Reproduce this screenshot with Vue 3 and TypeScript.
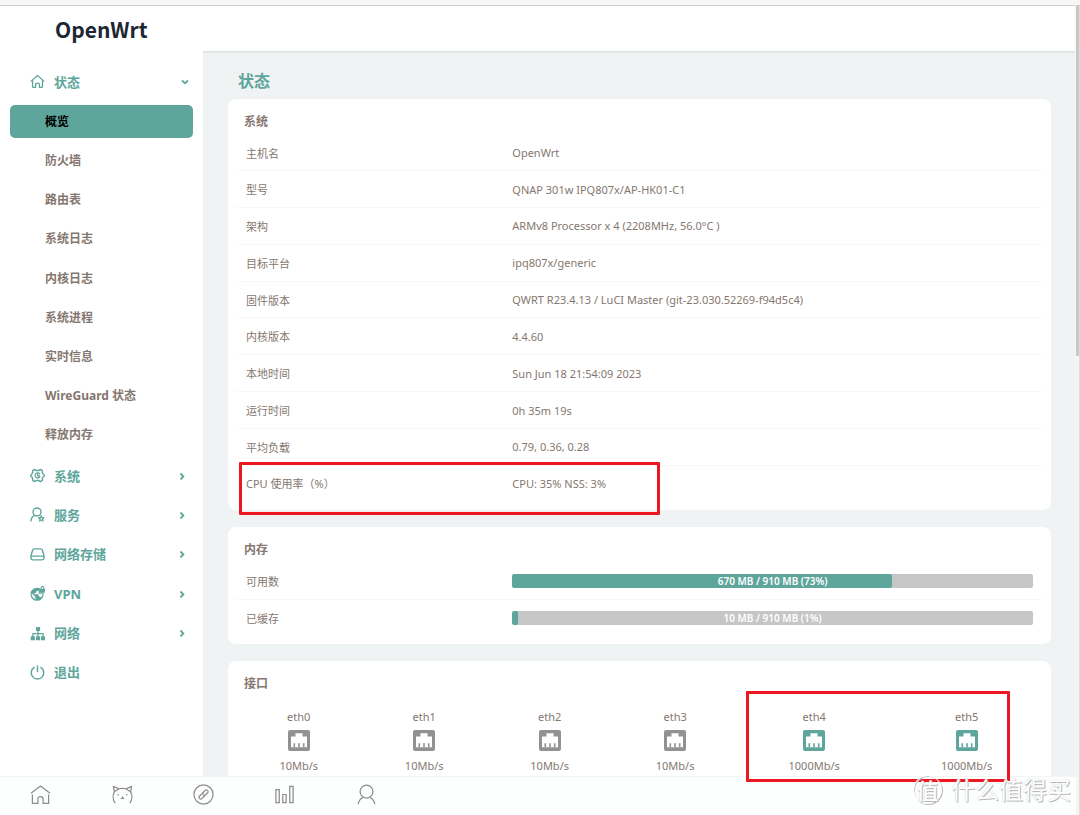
<script setup lang="ts">
interface Group { id: string; label: string }
interface Row { label: string; value: string }
interface Meter { label: string; text: string; percent: number }
interface Port { name: string; speed: string; up: boolean }

const statusPages: string[] = ['概览', '防火墙', '路由表', '系统日志', '内核日志', '系统进程', '实时信息', 'WireGuard 状态', '释放内存']
const groups: Group[] = [
  { id: 'gear', label: '系统' },
  { id: 'service', label: '服务' },
  { id: 'disk', label: '网络存储' },
  { id: 'vpn', label: 'VPN' },
  { id: 'network', label: '网络' },
  { id: 'power', label: '退出' },
]
const system: Row[] = [
  { label: '主机名', value: 'OpenWrt' },
  { label: '型号', value: 'QNAP 301w IPQ807x/AP-HK01-C1' },
  { label: '架构', value: 'ARMv8 Processor x 4 (2208MHz, 56.0°C )' },
  { label: '目标平台', value: 'ipq807x/generic' },
  { label: '固件版本', value: 'QWRT R23.4.13 / LuCI Master (git-23.030.52269-f94d5c4)' },
  { label: '内核版本', value: '4.4.60' },
  { label: '本地时间', value: 'Sun Jun 18 21:54:09 2023' },
  { label: '运行时间', value: '0h 35m 19s' },
  { label: '平均负载', value: '0.79, 0.36, 0.28' },
  { label: 'CPU 使用率（%）', value: 'CPU: 35% NSS: 3%' },
]
const memory: Meter[] = [
  { label: '可用数', text: '670 MB / 910 MB (73%)', percent: 73 },
  { label: '已缓存', text: '10 MB / 910 MB (1%)', percent: 1 },
]
const ports: Port[] = [
  { name: 'eth0', speed: '10Mb/s', up: false },
  { name: 'eth1', speed: '10Mb/s', up: false },
  { name: 'eth2', speed: '10Mb/s', up: false },
  { name: 'eth3', speed: '10Mb/s', up: false },
  { name: 'eth4', speed: '1000Mb/s', up: true },
  { name: 'eth5', speed: '1000Mb/s', up: true },
]
</script>

<template>
  <div class="app">
    <header class="top">
      <a class="brand" href="#">OpenWrt</a>
    </header>
    <div class="body">
      <nav class="side" aria-label="主菜单">
        <button class="group" type="button" aria-expanded="true">
          <svg class="gicon" viewBox="0 0 16 16" fill="none" stroke="currentColor" stroke-width="1.4" stroke-linejoin="round" stroke-linecap="round"><path d="M1.2 7.600 8 1.700l6.800 5.900M2.700 7v6.400c0 .5.3.9.9.9h2.300v-2.800c0-1.100.8-1.800 2.100-1.800s2.100.7 2.100 1.800v2.800h2.300c.6 0 .9-.4.9-.9V7" /></svg>
          <span>状态</span>
          <svg class="chev open" viewBox="0 0 8 8" fill="none" stroke="currentColor" stroke-width="1.800"><path d="M1 2.500 4 5.300 7 2.500" /></svg>
        </button>
        <ul class="pages">
          <li v-for="(page, i) in statusPages" :key="page">
            <a href="#" :class="{ active: i === 0 }">{{ page }}</a>
          </li>
        </ul>
        <ul class="groups">
          <li v-for="g in groups" :key="g.id">
            <button class="group" type="button">
              <svg class="gicon" viewBox="0 0 16 16" fill="none" stroke="currentColor" stroke-width="1.500" stroke-linejoin="round" stroke-linecap="round">
                <template v-if="g.id === 'gear'">
                  <path d="M4.800 1.500 6.400 2.600h3.200l1.600-1.100 2 1.200-.1 2 1.200 2 .9.700v1.200l-.9.700-1.200 2 .1 2-2 1.200-1.600-1.100H6.400l-1.600 1.100-2-1.200.1-2-1.200-2-.9-.7V7.400l.9-.7 1.200-2-.1-2z" />
                  <path d="M10.300 6.300A2.700 2.700 0 1 0 10.500 9.200M8.200 6.400v1.900h1.900" stroke-width="1.300" />
                </template>
                <template v-else-if="g.id === 'service'">
                  <circle cx="7.500" cy="5.200" r="4.200" />
                  <path d="M5.200 9C2.700 10 1.300 11.700 1 14.900" />
                  <path d="m12 9.300 1 1.900 2.200.3-1.600 1.500.4 2.200-2-1-2 1 .4-2.200-1.600-1.500 2.200-.3z" fill="currentColor" stroke-width="1" />
                  <circle cx="12" cy="12.500" r=".9" fill="#fff" stroke="none" />
                </template>
                <template v-else-if="g.id === 'disk'">
                  <path d="M4.700 2h6.600c1 0 1.600.5 1.900 1.400L15 9.500v2.300c0 1.200-.7 1.900-1.900 1.900H2.900C1.700 13.700 1 13 1 11.800V9.500l1.800-6.100C3.100 2.500 3.700 2 4.700 2zM1.200 9.700h13.600" />
                </template>
                <template v-else-if="g.id === 'vpn'">
                  <path d="M7.500 1.800a7 7 0 1 0 7 7c0-.6-.1-1-.2-1.500h-3.700V2.500a7 7 0 0 0-3.100-.7z" fill="currentColor" stroke="none" />
                  <path d="m1.800 7.800 3.700 3.700v1c0 .7.500 1.100 1.200 1.100v.6C3.600 13.700 1.500 11 1.800 7.800zM9.200 3.500v.8c0 .7-.6 1.200-1.400 1.200H6.600v1.200c0 .5-.3.700-.8.700H4.700v1.300h3.800c.5 0 .8.400.8.800v1.600h.8c.7 0 1.200.5 1.500 1.100 1.100-1 1.600-2.200 1.800-4H9.400z" fill="#fff" stroke="none" />
                  <rect x="10.600" y="2.900" width="5.400" height="4.200" rx=".6" fill="currentColor" stroke="none" />
                  <path d="M11.900 3V1.900a1.400 1.400 0 0 1 2.800 0V3" stroke-width="1.100" />
                </template>
                <template v-else-if="g.id === 'network'">
                  <g fill="currentColor" stroke="none">
                    <rect x="6.400" y="1" width="4.400" height="4.200" rx=".4" />
                    <rect x=".8" y="11" width="4.400" height="4.200" rx=".4" />
                    <rect x="6.300" y="11" width="4.400" height="4.200" rx=".4" />
                    <rect x="11.600" y="11" width="4.400" height="4.200" rx=".4" />
                  </g>
                  <path d="M8.500 5v6M3 11V8.200h11V11" stroke-width="1.300" />
                </template>
                <template v-else>
                  <path d="M8 1v6M4.400 2.600a6.700 6.700 0 1 0 7.200 0" />
                </template>
              </svg>
              <span>{{ g.label }}</span>
              <svg v-if="g.id !== 'power'" class="chev" viewBox="0 0 8 8" fill="none" stroke="currentColor" stroke-width="1.800"><path d="M2.500 1.500 5.400 4.500 2.500 7.500" /></svg>
            </button>
          </li>
        </ul>
      </nav>

      <main class="main">
        <h1>状态</h1>
        <section class="card">
          <h2>系统</h2>
          <table class="info system">
            <tbody>
              <tr v-for="r in system" :key="r.label">
                <th scope="row">{{ r.label }}</th>
                <td>{{ r.value }}</td>
              </tr>
            </tbody>
          </table>
          <div class="mark mark-cpu"></div>
        </section>

        <section class="card">
          <h2>内存</h2>
          <table class="info">
            <tbody>
              <tr v-for="m in memory" :key="m.label">
                <th scope="row">{{ m.label }}</th>
                <td>
                  <div class="meter" role="progressbar" :aria-label="m.label" :aria-valuenow="m.percent">
                    <div class="fill" :style="{ width: m.percent + '%' }"></div>
                    <span>{{ m.text }}</span>
                  </div>
                </td>
              </tr>
            </tbody>
          </table>
        </section>

        <section class="card">
          <h2>接口</h2>
          <ul class="ports">
            <li v-for="p in ports" :key="p.name" :class="{ up: p.up }">
              <span>{{ p.name }}</span>
              <svg viewBox="0 0 22 21"><rect width="22" height="21" rx="2" fill="currentColor" /><path d="M3 17.300V6.500h4.500V3.300h7v3.200H19v10.800z" fill="#fff" /><path d="M6.300 13.300v4M11 13.300v4M15.700 13.300v4" stroke="currentColor" stroke-width="1.600" /></svg>
              <span>{{ p.speed }}</span>
            </li>
          </ul>
          <div class="mark mark-ports"></div>
        </section>
      </main>
    </div>

    <div class="scroll"></div>

    <nav class="dock" aria-label="快捷导航">
      <a href="#" aria-label="主页"><svg viewBox="0 0 22 22"><path d="M1 9.700 11 2l10 7.700M2.500 11v9.300h5.800v-4.800c0-1.400.9-2.400 2.700-2.400s2.700 1 2.700 2.400v4.800h5.800V11" /></svg></a>
      <a href="#" aria-label="猫咪"><svg viewBox="0 0 22 22"><path d="M3.300 20C.8 16.500.6 11.500 2.500 8.200L1.500 2.500 7.500 5c2.300-.6 4.700-.6 7 0l6-2.500-1 5.700c1.900 3.300 1.700 8.300-.8 11.800M2.500 8.200 7.500 5M19.500 8.200 14.500 5M5.700 11.500l1.600-.5M16.300 11.500l-1.600-.5M11 13v1.500l-1.700 1M11 14.500l1.700 1" /></svg></a>
      <a href="#" aria-label="链接"><svg viewBox="0 0 22 22"><circle cx="11" cy="11" r="10" /><path d="m9.500 10 3.300-3.300c.7-.7 1.600-.7 2.300 0l.2.200c.7.700.7 1.600 0 2.300L13 11.500c-.7.700-1.600.7-2.300 0M12.500 12l-3.300 3.300c-.7.700-1.600.7-2.300 0l-.2-.2c-.7-.7-.7-1.600 0-2.300L9 10.500c.7-.7 1.600-.7 2.300 0" /></svg></a>
      <a href="#" aria-label="统计"><svg viewBox="0 0 22 22"><path d="M2 6h3.500v13.500H2zM9.200 11h3.500v8.500H9.200zM16.500 2.500H20v17h-3.500z" /></svg></a>
      <a href="#" aria-label="用户"><svg viewBox="0 0 22 22"><circle cx="11" cy="8" r="6.700" /><path d="M7.500 14C4.500 15.300 3 17.500 2.300 21M14.500 14c3 1.300 4.500 3.500 5.200 7" /></svg></a>
    </nav>

    <div class="stamp"><b>值</b><span>什么值得买</span></div>
  </div>
</template>

<style>
html,
body {
  margin: 0;
  height: 100%;
  overflow: hidden;
}
</style>

<style scoped>
* {
  box-sizing: border-box;
}
.app {
  --green: #5ea69b;
  position: relative;
  height: 100vh;
  overflow: hidden;
  display: flex;
  flex-direction: column;
  background: #fff;
  color: #85776f;
  font-family: "Noto Sans", "Noto Sans CJK SC", sans-serif;
  font-size: 11px;
}
a {
  color: inherit;
  text-decoration: none;
}
ul {
  list-style: none;
  margin: 0;
  padding: 0;
}
.top {
  flex: none;
  height: 51px;
  padding: 2px 0 0 55px;
  border-top: 5px solid #f7f7f7;
  box-shadow: inset 0 1px #ccc;
  display: flex;
  align-items: center;
}
.brand {
  color: #1c2733;
  font: 700 21px/30px "Noto Sans CJK SC", sans-serif;
}
.body {
  flex: 1;
  min-height: 0;
  display: flex;
}
.side {
  flex: none;
  width: 203px;
  padding: 14px 10px 0;
}
.group {
  width: 100%;
  height: 33px;
  padding: 0 4px 0 20px;
  border: 0;
  background: none;
  display: flex;
  align-items: center;
  color: var(--green);
  font: 700 13px/20px "Noto Sans", "Noto Sans CJK SC", sans-serif;
  text-align: left;
}
.gicon {
  flex: none;
  width: 15px;
  height: 15px;
  margin-right: 9px;
}
.chev {
  width: 8px;
  height: 8px;
  margin-left: auto;
  margin-right: 3px;
}
.chev.open {
  margin-right: 0;
}
.pages {
  min-height: 346px;
  margin: 7px 0 8px;
  display: grid;
  align-content: space-between;
}
.pages a {
  display: flex;
  align-items: center;
  height: 33px;
  padding: 0 0 1px 35px;
  border-radius: 5px;
  font-size: 12px;
  font-weight: 700;
}
.pages .active {
  background: var(--green);
  color: #000;
}
.groups {
  min-height: 230px;
  display: grid;
  align-content: space-between;
}
.main {
  flex: 1;
  min-width: 0;
  overflow: hidden;
  padding: 17px 29px 0 25px;
  background: #eff3f4;
  box-shadow: inset 0 3px 3px -2px #d3d9d9;
}
h1 {
  margin: 0 0 4px 10px;
  color: var(--green);
  font-size: 16px;
  line-height: 27px;
}
h2 {
  margin: 0 0 2px 8px;
  font-size: 12px;
  line-height: 22px;
}
.card {
  position: relative;
  margin-bottom: 17px;
  padding: 12px 8px 8px;
  border-radius: 8px;
  background: #fff;
}
.info {
  width: 100%;
  height: 73px;
  border-collapse: collapse;
  table-layout: fixed;
}
.system {
  height: 366px;
  margin-bottom: 1px;
}
.info th {
  width: 33%;
  text-align: left;
  font-weight: 400;
}
.info th,
.info td {
  padding: 0 10px;
}
.info tr + tr {
  border-top: 1px solid #f8f8f8;
}
.meter {
  position: relative;
  height: 14px;
  border-radius: 2px;
  background: #c6c6c6;
  overflow: hidden;
}
.fill {
  height: 100%;
  border-radius: 2px;
  background: var(--green);
}
.meter span {
  position: absolute;
  inset: 0;
  color: #fff;
  font-size: 10px;
  font-weight: 600;
  line-height: 14px;
  text-align: center;
}
.ports {
  display: grid;
  grid-template-columns: repeat(4, 125fr) repeat(2, 152fr);
  padding: 12px 0 40px;
}
.ports li {
  display: flex;
  flex-direction: column;
  align-items: center;
  line-height: 16px;
}
.ports svg {
  width: 22px;
  height: 21px;
  margin: 5px 0 7px;
  color: #929292;
}
.ports .up svg {
  color: var(--green);
}
.mark {
  position: absolute;
  z-index: 2;
  border: 3px solid #ee1620;
  border-radius: 1px;
}
.mark-cpu {
  left: 11px;
  bottom: -5px;
  width: 421px;
  height: 53px;
}
.mark-ports {
  right: 41px;
  top: 30px;
  width: 264px;
  height: 91px;
}
.scroll {
  position: absolute;
  top: 5px;
  right: 0;
  bottom: 0;
  width: 5px;
  border-right: 1px solid #ddd;
  background: linear-gradient(#c8c8c8, #c8c8c8) 1px 0 / 3px 351px no-repeat #f4f6f6;
}
.dock {
  position: absolute;
  z-index: 1;
  left: 0;
  right: 4px;
  bottom: 0;
  height: 39px;
  padding: 0 calc(100% - 411px) 3px 0;
  display: flex;
  background: #fdfefe;
  border-top: 1px solid #f3f5f5;
}
.dock a {
  flex: 1;
  display: flex;
  align-items: center;
  justify-content: center;
}
.dock svg {
  width: 21px;
  height: 21px;
  fill: none;
  stroke: #8c8c8c;
  stroke-width: 1.3;
}
.stamp {
  position: absolute;
  z-index: 3;
  right: 9px;
  bottom: 11px;
  display: flex;
  align-items: center;
  gap: 9px;
  color: #fff;
  font: 400 24px/30px "Noto Sans CJK SC", sans-serif;
  text-shadow: 1px 1px 0 #b8b8b8, 0 0 1px #bbb;
}
.stamp b {
  width: 29px;
  height: 29px;
  border: 1px solid #fff;
  border-radius: 50%;
  box-shadow: 1px 1px 0 #b8b8b8, inset 1px 1px 0 #c4c4c4;
  font-size: 22px;
  font-weight: 500;
  line-height: 26px;
  text-align: center;
}
</style>
